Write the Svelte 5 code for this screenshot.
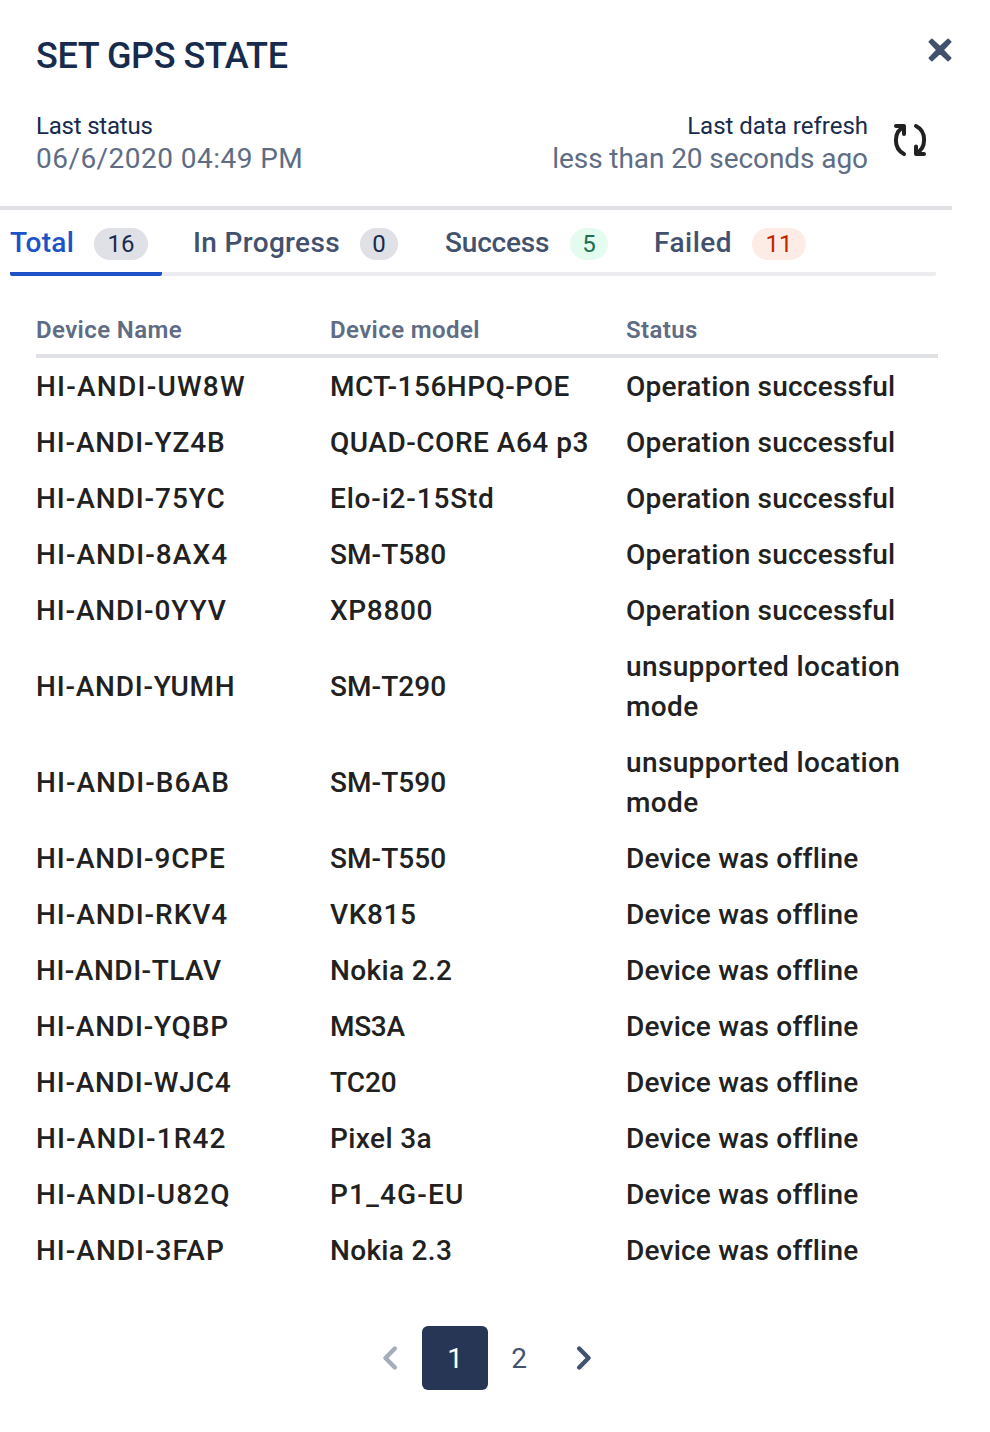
<script>
  const tabs = [
    { id: 'total', label: 'Total', count: 16 },
    { id: 'progress', label: 'In Progress', count: 0 },
    { id: 'success', label: 'Success', count: 5 },
    { id: 'failed', label: 'Failed', count: 11 }
  ];
  let active = $state('total');
  let page = $state(1);

  // Each status carries its own letter tracking, in pixels.
  const ok = { text: 'Operation successful', track: 0.22 };
  const unsupported = { text: 'unsupported location mode', track: 0.37 };
  const offline = { text: 'Device was offline', track: 0.22 };

  // name, name tracking, model, model tracking, status
  const devices = [
    ['HI-ANDI-UW8W', 1.24, 'MCT-156HPQ-POE', 0.5, ok],
    ['HI-ANDI-YZ4B', 0.87, 'QUAD-CORE A64 p3', 0.52, ok],
    ['HI-ANDI-75YC', 0.95, 'Elo-i2-15Std', 0.82, ok],
    ['HI-ANDI-8AX4', 1.05, 'SM-T580', 0.08, ok],
    ['HI-ANDI-0YYV', 0.87, 'XP8800', 0.65, ok],
    ['HI-ANDI-YUMH', 0.8, 'SM-T290', 0.08, unsupported],
    ['HI-ANDI-B6AB', 1.05, 'SM-T590', 0.08, unsupported],
    ['HI-ANDI-9CPE', 0.87, 'SM-T550', 0.08, offline],
    ['HI-ANDI-RKV4', 0.95, 'VK815', 0.6, offline],
    ['HI-ANDI-TLAV', 0.52, 'Nokia 2.2', 0.35, offline],
    ['HI-ANDI-YQBP', 0.82, 'MS3A', -0.3, offline],
    ['HI-ANDI-WJC4', 0.8, 'TC20', 0, offline],
    ['HI-ANDI-1R42', 1.15, 'Pixel 3a', 0.4, offline],
    ['HI-ANDI-U82Q', 1.15, 'P1_4G-EU', 1.2, offline],
    ['HI-ANDI-3FAP', 1, 'Nokia 2.3', 0.33, offline]
  ];
</script>

<main class="panel">
  <header>
    <div class="title-row">
      <h1>SET GPS STATE</h1>
      <button class="close" aria-label="Close">
        <svg width="24" height="24" viewBox="0 0 24 24">
          <path d="M3.900 1.300 12 8.900 20.100 1.300 22.700 3.900 15.100 12 22.700 20.100 20.100 22.700 12 15.100 3.900 22.700 1.300 20.100 8.900 12 1.300 3.900Z" />
        </svg>
      </button>
    </div>
    <div class="info">
      <div>
        <div class="caption status">Last status</div>
        <div class="value date">06/6/2020 04:49 PM</div>
      </div>
      <div class="refresh">
        <div class="right">
          <div class="caption">Last data refresh</div>
          <div class="value ago">less than 20 seconds ago</div>
        </div>
        <button class="reload" aria-label="Refresh">
          <svg width="34" height="34" viewBox="0 0 34 34">
            <path d="M3 3H11V11M11 3.500C0.200 9 0.200 25.500 11 31M23 3C33.800 8.500 33.800 25 23 30.500M31 31H23V23.500" />
            <path class="tip" d="M6 3H11V8.500ZM23 25.500V31H28.500Z" />
          </svg>
        </button>
      </div>
    </div>
  </header>

  <nav>
    {#each tabs as tab}
      <button class="tab {tab.id}" class:active={active === tab.id} onclick={() => (active = tab.id)}>
        <span class="label">{tab.label}</span>
        <span class="count">{tab.count}</span>
      </button>
    {/each}
  </nav>

  <table>
    <thead>
      <tr><th>Device Name</th><th>Device model</th><th>Status</th></tr>
    </thead>
    <tbody>
      {#each devices as [name, nameTrack, model, modelTrack, status]}
        <tr>
          <td style:letter-spacing="{nameTrack}px">{name}</td>
          <td style:letter-spacing="{modelTrack}px">{model}</td>
          <td style:letter-spacing="{status.track}px">{status.text}</td>
        </tr>
      {/each}
    </tbody>
  </table>

  <footer>
    <button class="arrow prev" aria-label="Previous page">
      <svg width="16" height="24" viewBox="0 0 16 24"><path d="M12.800 2.500 3.500 12 12.800 21.500" /></svg>
    </button>
    {#each [1, 2] as n}
      <button class="page" class:current={page === n} onclick={() => (page = n)}>{n}</button>
    {/each}
    <button class="arrow next" aria-label="Next page">
      <svg width="16" height="24" viewBox="0 0 16 24"><path d="M3.200 2.500 12.500 12 3.200 21.500" /></svg>
    </button>
  </footer>
</main>

<style>
  :global(body) {
    background: #fff;
  }
  .panel {
    box-sizing: border-box;
    width: 990px;
    height: 1432px;
    overflow: hidden;
    font-family: Roboto, 'Open Sans', sans-serif;
    color: #212121;
  }
  button {
    border: 0;
    margin: 0;
    padding: 0;
    background: none;
    font: inherit;
    color: inherit;
    cursor: pointer;
  }
  svg {
    display: block;
    fill: none;
    stroke: currentColor;
  }
  header {
    box-sizing: border-box;
    width: 952px;
    height: 210px;
    padding: 32px 0 0 36px;
    border-bottom: 4px solid #dfe1e5;
  }
  .title-row {
    display: flex;
    justify-content: space-between;
    height: 78px;
  }
  h1 {
    margin: 0;
    font-size: 36px;
    line-height: 48px;
    font-weight: 500;
    letter-spacing: -0.4px;
    color: #172b4d;
  }
  .close {
    align-self: flex-start;
    margin-top: 6px;
    color: #42526e;
  }
  .close svg {
    fill: currentColor;
    stroke-width: 1.6;
    stroke-linejoin: round;
  }
  .info,
  .refresh {
    display: flex;
    justify-content: space-between;
  }
  .caption {
    font-size: 24px;
    line-height: 32px;
    color: #172b4d;
  }
  .status {
    letter-spacing: -0.2px;
  }
  .value {
    font-size: 28px;
    line-height: 34px;
    color: #5e6c84;
  }
  .date {
    letter-spacing: 0.46px;
  }
  .ago {
    letter-spacing: -0.08px;
  }
  .right {
    text-align: right;
  }
  .reload {
    margin: 13px 25px 0 25px;
    align-self: flex-start;
    color: #212121;
  }
  .reload svg {
    stroke-width: 4;
    stroke-linecap: round;
    stroke-linejoin: round;
  }
  .reload .tip {
    stroke-width: 1;
    fill: currentColor;
  }
  nav {
    display: flex;
    box-sizing: border-box;
    width: 926px;
    height: 66px;
    margin-left: 10px;
    border-radius: 2px;
    background: linear-gradient(#ebebf0, #ebebf0) 0 100% / 100% 4px no-repeat;
  }
  .tab {
    display: flex;
    justify-content: space-between;
    box-sizing: border-box;
    height: 66px;
    border-bottom: 4px solid transparent;
    font-size: 28px;
    line-height: 32px;
    font-weight: 500;
    color: #42526e;
    white-space: nowrap;
  }
  .label {
    padding-top: 17px;
  }
  .count {
    box-sizing: border-box;
    height: 32px;
    margin: 18px 14px 0 0;
    border-radius: 16px;
    background: #dfe1e6;
    color: #172b4d;
    font-size: 24px;
    font-weight: 400;
    text-align: center;
  }
  .tab.active {
    color: #1d53c6;
    background: linear-gradient(#1d53c6, #1d53c6) 0 100% / 100% 4px no-repeat border-box;
    border-radius: 2px;
  }
  .total { width: 152px; }
  .total .label { letter-spacing: 0.3px; }
  .total .count { width: 54px; }
  .progress { width: 219px; margin-left: 31px; }
  .progress .label { letter-spacing: 0.35px; }
  .progress .count { width: 38px; }
  .success { width: 177px; margin-left: 33px; }
  .success .label { letter-spacing: -0.2px; }
  .success .count { width: 38px; background: #e3fcef; color: #216e4e; }
  .failed { width: 166px; margin-left: 32px; }
  .failed .label { letter-spacing: 0.5px; }
  .failed .count { width: 54px; background: #fdebe6; color: #bf2600; }
  table {
    width: 902px;
    margin: 28px 0 0 36px;
    table-layout: fixed;
    border-collapse: separate;
    border-spacing: 0;
  }
  th,
  td {
    text-align: left;
    line-height: 40px;
  }
  th {
    padding: 6px 0 4px;
    border-bottom: 4px solid #dfe1e5;
    font-size: 24px;
    font-weight: 600;
    letter-spacing: 0.4px;
    color: #5e6c84;
  }
  th:nth-child(1) { width: 294px; }
  th:nth-child(2) { width: 296px; }
  td {
    padding: 9px 0 7px;
    font-size: 28px;
    font-weight: 500;
  }
  footer {
    display: flex;
    align-items: center;
    height: 64px;
    margin: 48px 0 0 358px;
  }
  .page {
    width: 62px;
    height: 64px;
    font-size: 28px;
    color: #42526e;
  }
  .page.current {
    width: 66px;
    border-radius: 6px;
    background: #283655;
    color: #fff;
  }
  .arrow {
    display: flex;
    align-items: center;
    justify-content: center;
    width: 64px;
    height: 64px;
    color: #42526e;
  }
  .next {
    width: 68px;
  }
  .arrow svg {
    stroke-width: 4.400;
    stroke-linecap: round;
    stroke-linejoin: round;
  }
  .prev {
    color: #a5adba;
  }
</style>
